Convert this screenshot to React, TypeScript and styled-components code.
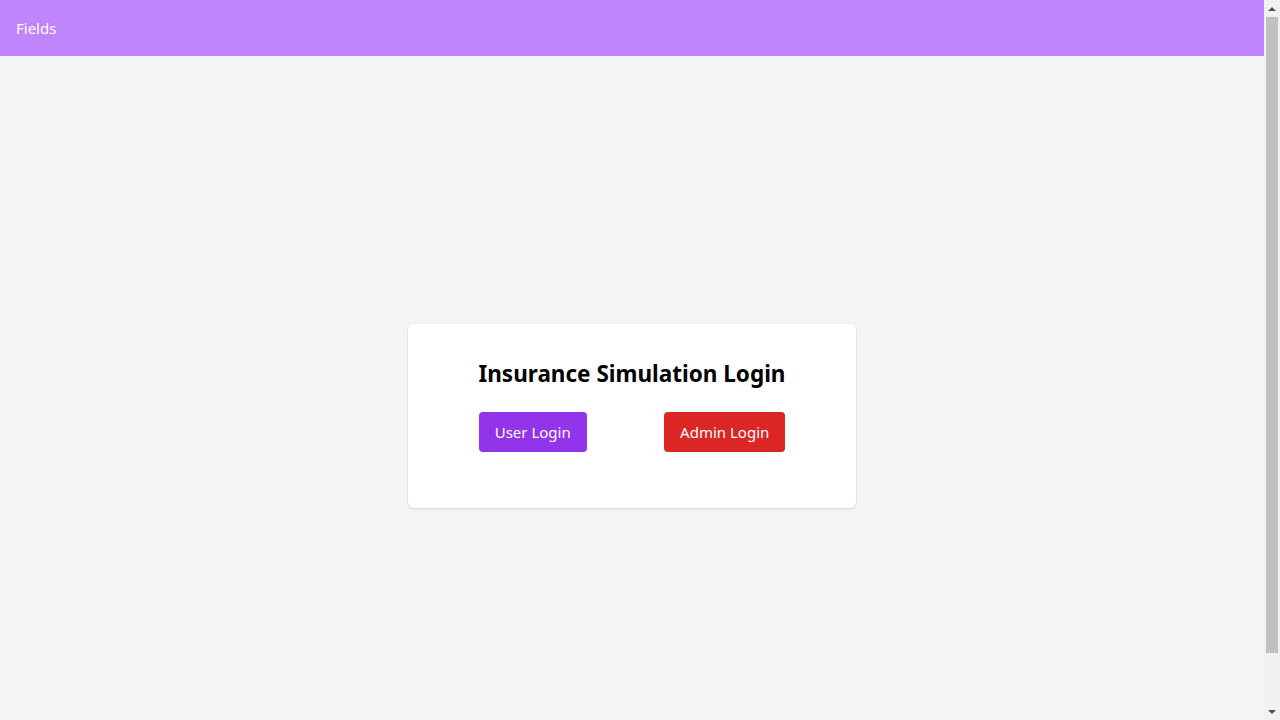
import React from "react";
import styled, { createGlobalStyle } from "styled-components";

const GlobalStyle = createGlobalStyle`
  html, body {
    margin: 0;
    padding: 0;
  }
  body {
    font-family: "Noto Sans", "Open Sans", sans-serif;
    background: #f3f4f6;
  }
  * { box-sizing: border-box; }
`;

const Page = styled.div`
  margin-right: 16px;
`;

const Header = styled.header`
  height: 56px;
  background: #c084fc;
  display: flex;
  align-items: center;
  padding: 0 16px;
`;

const Brand = styled.span`
  color: #ffffff;
  font-size: 15px;
`;

const Main = styled.main`
  min-height: 100vh;
  display: flex;
  align-items: center;
  justify-content: center;
  background: #f3f4f6;
`;

const Card = styled.div`
  width: 448px;
  background: #ffffff;
  border-radius: 6px;
  box-shadow: 0 1px 3px rgba(0, 0, 0, 0.1), 0 1px 2px rgba(0, 0, 0, 0.06);
  padding: 32px 32px 56px;
`;

const Title = styled.h1`
  margin: 0 0 22px;
  padding-top: 2px;
  font-size: 22.5px;
  line-height: 32px;
  font-weight: 700;
  text-align: center;
  color: #000;
`;

const ButtonRow = styled.div`
  display: flex;
  justify-content: space-around;
`;

const Button = styled.button<{ $tone: "purple" | "red" }>`
  height: 40px;
  padding: 0 16px;
  border: none;
  border-radius: 4px;
  font-family: inherit;
  font-size: 15px;
  color: #ffffff;
  cursor: pointer;
  background: ${(p) => (p.$tone === "purple" ? "#9333ea" : "#dc2626")};
`;

const ScrollTrack = styled.div`
  position: fixed;
  top: 0;
  right: 0;
  width: 16px;
  height: 100vh;
  background: #f1f1f1;
  display: flex;
  flex-direction: column;
  align-items: center;
`;

const ScrollArrow = styled.div<{ $dir: "up" | "down" }>`
  flex: 0 0 17px;
  display: flex;
  align-items: center;
  justify-content: center;
  &::before {
    content: "";
    width: 0;
    height: 0;
    border-left: 4px solid transparent;
    border-right: 4px solid transparent;
    ${(p) =>
      p.$dir === "up"
        ? "border-bottom: 4px solid #505050;"
        : "border-top: 4px solid #505050;"}
  }
`;

const ScrollThumbArea = styled.div`
  flex: 1;
  width: 100%;
  padding: 0 2px;
`;

const ScrollThumb = styled.div`
  height: 636px;
  background: #c1c1c1;
`;

export default function App() {
  return (
    <>
      <GlobalStyle />
      <Page>
        <Header>
          <Brand>Fields</Brand>
        </Header>
        <Main>
          <Card>
            <Title>Insurance Simulation Login</Title>
            <ButtonRow>
              <Button $tone="purple">User Login</Button>
              <Button $tone="red">Admin Login</Button>
            </ButtonRow>
          </Card>
        </Main>
      </Page>
      <ScrollTrack aria-hidden="true">
        <ScrollArrow $dir="up" />
        <ScrollThumbArea>
          <ScrollThumb />
        </ScrollThumbArea>
        <ScrollArrow $dir="down" />
      </ScrollTrack>
    </>
  );
}
